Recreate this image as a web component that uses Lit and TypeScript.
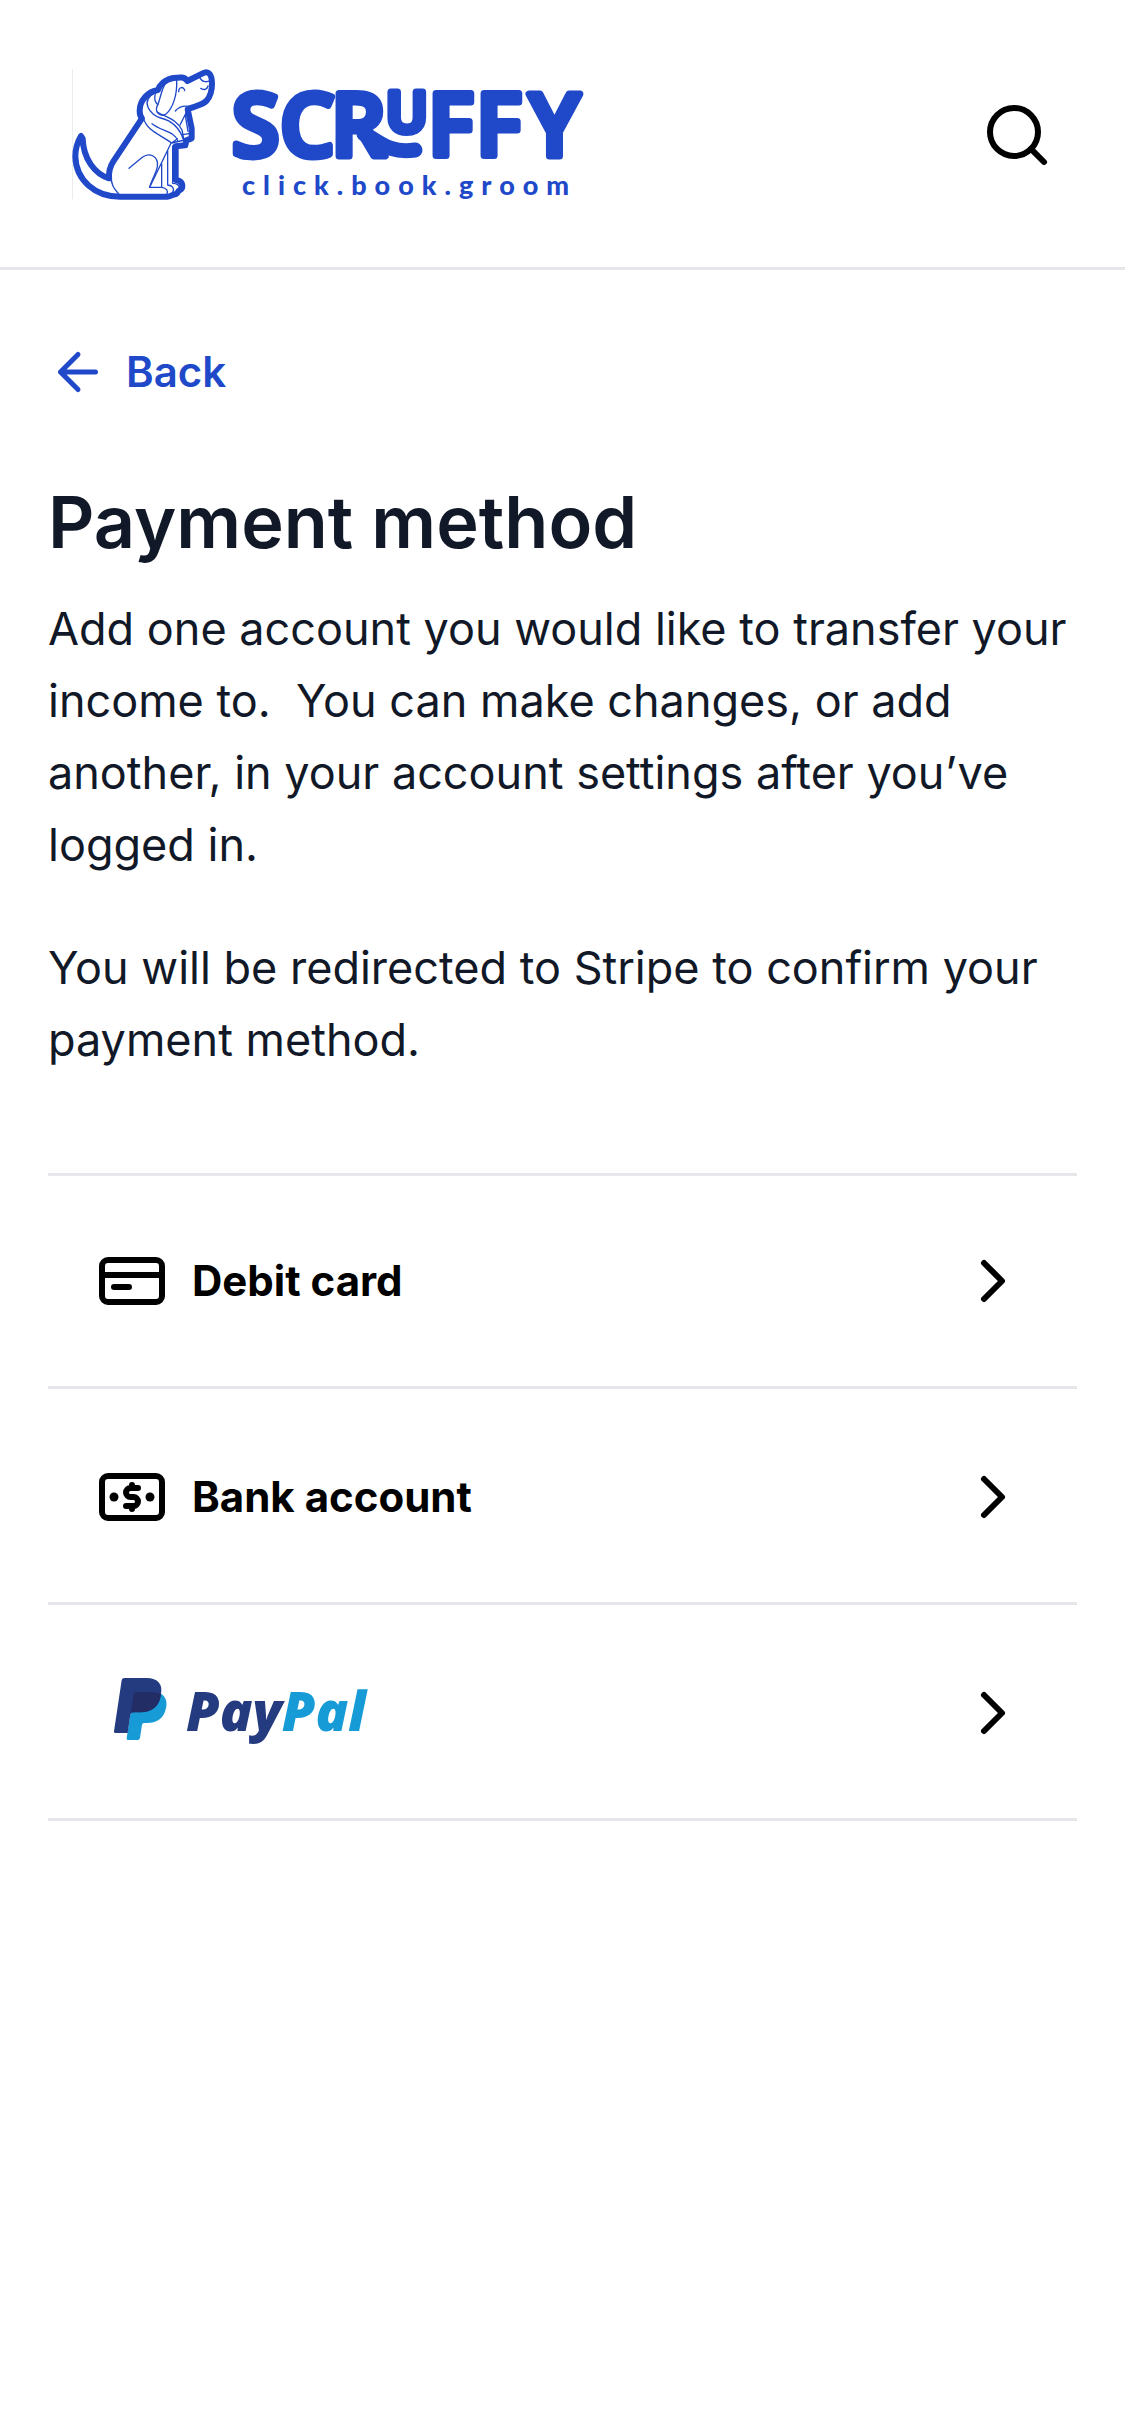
import { LitElement, html, css, svg } from "lit";
import { customElement, property } from "lit/decorators.js";

@customElement("scruffy-logo")
class ScruffyLogo extends LitElement {
  static styles = css`
    :host {
      display: block;
    }
    .logo {
      display: block;
      width: 510px;
      height: 138px;
      overflow: visible;
    }
    .edge {
      stroke: #e2e2e2;
      stroke-width: 2;
    }
    .outline,
    .detail {
      fill: none;
      stroke: #2049c9;
      stroke-linecap: round;
      stroke-linejoin: round;
    }
    .outline {
      stroke-width: 18;
    }
    .detail {
      stroke-width: 4;
    }
    .name {
      font-family: "Open Sans", sans-serif;
      font-weight: 600;
      font-size: 86px;
      fill: #2049c9;
      stroke: #2049c9;
      stroke-width: 7;
      stroke-linejoin: round;
    }
    .small {
      font-size: 56px;
    }
    .swash {
      fill: none;
      stroke: #2049c9;
      stroke-width: 15;
      stroke-linecap: round;
    }
    .tagline {
      font-family: Lato, sans-serif;
      font-weight: 900;
      font-size: 27px;
      letter-spacing: 8px;
      fill: #2049c9;
    }
  `;

  render() {
    return html`
      <svg class="logo" viewBox="72 66 510 138" role="img" aria-label="Scruffy click.book.groom">
        <g transform="translate(60 60) scale(0.33333)">
          <path class="edge" d="M37.500 27V418" />
          <path
            class="outline"
            d="M63 228C50 250 46 268 46 290C48 360 105 410 180 410H322C332 410 334 404 348 402C356 398 352 394 358 391C372 384 368 368 358 363L347 360V259L376 256L379 241L395 235V205L383 148C395 140 425 138 440 122C452 108 456 92 456 72C456 44 446 30 428 40L382 63C374 50 362 51 340 54C314 58 298 76 294 90C264 94 239 122 239 152C239 164 241 170 246 175L160 304C148 322 146 336 147 355C104 342 70 296 68 236Z"
          />
          <g class="detail">
            <path d="M154 348C152 376 164 388 177 403" />
            <path d="M207 325L247 292C268 276 297 288 292 320C288 342 274 360 269 382H305C320 384 326 394 320 403" />
            <path d="M333 250L269 382M305 312V382M323 272V375C338 376 344 386 338 397M338 258V370C352 370 360 377 358 386" />
            <path d="M248 170C262 216 300 222 335 249L374 240M336 248L352 236" />
            <path d="M286 98C238 122 270 166 302 174C336 182 360 206 371 241" />
            <path d="M292 156C322 174 348 176 366 210L371 236" />
            <path d="M276 191C304 214 344 212 354 244" />
            <path d="M350 62C352 104 338 146 318 162C302 172 286 158 290 142C304 114 302 86 320 66" />
            <path d="M302 78C280 96 280 124 294 134" />
            <path d="M356 95C356 80 372 78 374 92" />
            <path d="M418 50C424 66 438 68 450 62M422 85C430 92 442 88 444 78" />
            <path d="M346 153C356 140 374 137 388 139L360 195M376 166L384 214M368 224L392 220" />
          </g>
        </g>
        <text class="name" x="232" y="156">S</text>
        <text class="name" x="280" y="156">C</text>
        <text class="name" x="331" y="156">R</text>
        <text class="name small" x="386" y="132">U</text>
        <path class="swash" d="M364 134C378 140 388 154 415 150" />
        <text class="name" x="428" y="156">F</text>
        <text class="name" x="476" y="156">F</text>
        <text class="name" x="529" y="156">Y</text>
        <text class="tagline" x="242" y="195">click.book.groom</text>
      </svg>
    `;
  }
}

@customElement("paypal-logo")
class PaypalLogo extends LitElement {
  static styles = css`
    :host {
      display: block;
    }
    .logo {
      display: block;
      width: 280px;
      height: 72px;
      overflow: visible;
    }
    .word {
      font-family: "Open Sans", sans-serif;
      font-weight: 800;
      font-style: italic;
      font-size: 54px;
      fill: #253b80;
    }
    .light {
      fill: #179bd7;
    }
    .navy {
      fill: #253b80;
    }
    .deep {
      fill: #222d65;
    }
  `;

  render() {
    return html`
      <svg class="logo" viewBox="0 0 280 72" role="img" aria-label="PayPal">
        <g transform="translate(-66 -87) scale(0.33333)">
          <path
            class="light"
            d="M393 311C409 321 412 338 408 354C402 386 380 399 350 399H342Q337 399 336 405L330 443Q329 450 323 450H294Q289 450 290 445L303 360Z"
          />
          <path
            class="navy"
            d="M282 264H350C384 265 399 282 393 312C389 348 368 366 332 367H310Q302 367 301 374L293 429H256Q251 429 252 424L275 271Q276 265 282 264Z"
          />
          <path class="deep" d="M319 306H360Q382 306 393 312C389 348 368 366 332 367H310Q303 367 302 371L311 313Q312 306 319 306Z" />
        </g>
        <text class="word" x="90" y="54">Pay<tspan class="light">Pal</tspan></text>
      </svg>
    `;
  }
}

const glyphs = {
  search: svg`<circle cx="11" cy="11" r="8" /><path d="m21 21-4.350-4.350" />`,
  back: svg`<path d="M19 12H5m7 7-7-7 7-7" />`,
  chevron: svg`<path d="m9 18 6-6-6-6" />`,
  card: svg`<rect x="2" y="5" width="20" height="14" rx="2" /><path d="M2 10h20M6 14h5" />`,
  cash: svg`<rect x="2" y="5" width="20" height="14" rx="2" /><path d="M14 9h-2.500a1.500 1.500 0 0 0 0 3h1a1.500 1.500 0 0 1 0 3H10M12 8v1M12 15v1" /><circle cx="6" cy="12" r="1.500" fill="currentColor" stroke="none" /><circle cx="18" cy="12" r="1.500" fill="currentColor" stroke="none" />`,
};

@customElement("line-icon")
class LineIcon extends LitElement {
  static styles = css`
    :host {
      display: block;
      flex: none;
      width: 72px;
      height: 72px;
    }
    .icon {
      display: block;
      width: 100%;
      height: 100%;
      fill: none;
      stroke: currentColor;
      stroke-width: 2;
      stroke-linecap: round;
      stroke-linejoin: round;
    }
  `;

  @property() name: keyof typeof glyphs = "chevron";

  render() {
    return html`<svg class="icon" viewBox="0 0 24 24" aria-hidden="true">${glyphs[this.name]}</svg>`;
  }
}

@customElement("app-root")
class AppRoot extends LitElement {
  static styles = css`
    :host {
      display: block;
      min-height: 100vh;
      background: #fff;
      color: #111827;
      font-family: Inter, sans-serif;
    }
    .header {
      display: flex;
      align-items: center;
      justify-content: space-between;
      padding: 66px 72px 63px;
      border-bottom: 3px solid #e5e7eb;
    }
    .search {
      padding: 0;
      border: 0;
      background: none;
      color: #000;
    }
    .main {
      padding: 66px 48px;
    }
    .back {
      display: inline-flex;
      align-items: center;
      gap: 18px;
      color: #2049c9;
      font-size: 42px;
      font-weight: 600;
      line-height: 72px;
      text-decoration: none;
    }
    .back-icon {
      width: 60px;
      height: 60px;
    }
    .title {
      margin: 69px 0 26px;
      font-size: 72px;
      font-weight: 600;
      line-height: 90px;
    }
    .copy {
      margin: 0 0 51px;
      font-size: 45px;
      line-height: 72px;
      white-space: pre-wrap;
    }
    .methods {
      margin: 97px 0 0;
      padding: 0;
      list-style: none;
    }
    .method {
      border-top: 3px solid transparent;
      border-bottom: 3px solid #e5e7eb;
    }
    .method:first-child {
      border-top-color: #e5e7eb;
    }
    .link {
      display: flex;
      align-items: center;
      gap: 24px;
      padding: 69px 48px;
      color: #000;
      font-size: 42px;
      font-weight: 700;
      line-height: 72px;
      text-decoration: none;
    }
    .next {
      margin-left: auto;
    }
  `;

  private methods = [
    { icon: "card", label: "Debit card" },
    { icon: "cash", label: "Bank account" },
    { icon: "", label: "PayPal" },
  ];

  render() {
    return html`
      <header class="header">
        <scruffy-logo></scruffy-logo>
        <button class="search" type="button" aria-label="Search"><line-icon name="search"></line-icon></button>
      </header>
      <main class="main">
        <a class="back" href="#back"><line-icon class="back-icon" name="back"></line-icon>Back</a>
        <h1 class="title">Payment method</h1>
        <p class="copy">Add one account you would like to transfer your income to.  You can make changes, or add another, in your account settings after you’ve logged in.</p>
        <p class="copy">You will be redirected to Stripe to confirm your payment method.</p>
        <ul class="methods">
          ${this.methods.map(
            (m) => html`
              <li class="method">
                <a class="link" href="#method">
                  ${m.icon
                    ? html`<line-icon name=${m.icon}></line-icon><span>${m.label}</span>`
                    : html`<paypal-logo></paypal-logo>`}
                  <line-icon class="next" name="chevron"></line-icon>
                </a>
              </li>
            `
          )}
        </ul>
      </main>
    `;
  }
}
